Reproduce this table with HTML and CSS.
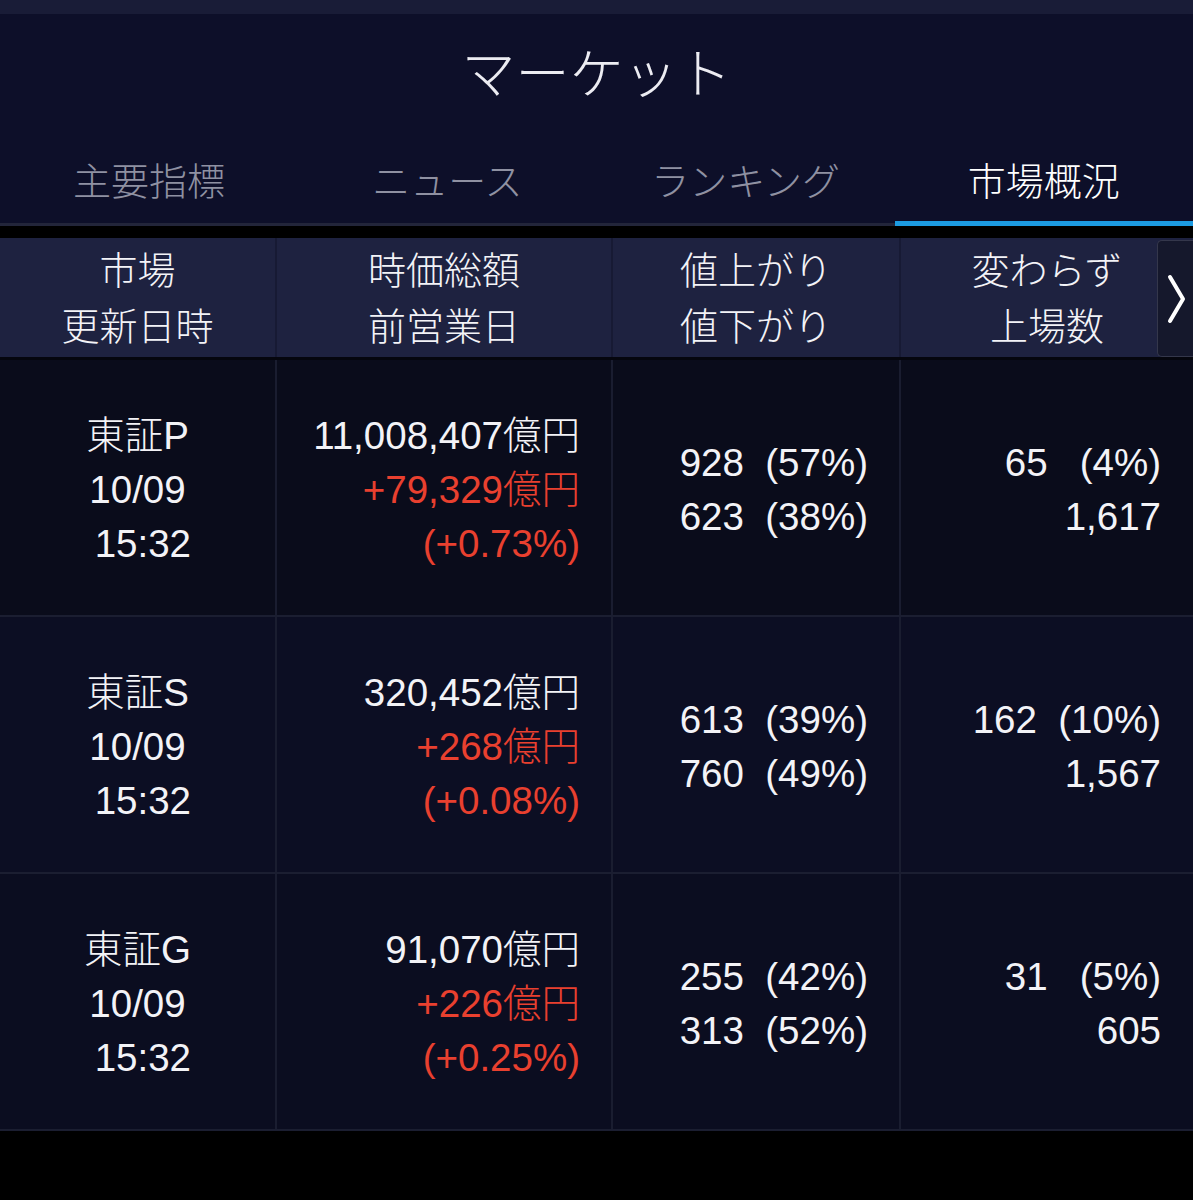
FILE: index.html
```html
<!DOCTYPE html>
<html lang="ja">
<head>
<meta charset="utf-8">
<title>マーケット</title>
<link rel="stylesheet" href="styles.css">
</head>
<body>
<div class="topbar"></div>
<header class="nav">
  <h1 class="title">マーケット</h1>
  <div class="tabs">
    <div class="tab">主要指標</div>
    <div class="tab">ニュース</div>
    <div class="tab">ランキング</div>
    <div class="tab active">市場概況</div>
  </div>
</header>
<section class="table">
  <div class="head">
    <div class="hc c1">市場<br>更新日時</div>
    <div class="hc c2">時価総額<br>前営業日</div>
    <div class="hc c3">値上がり<br>値下がり</div>
    <div class="hc c4">変わらず<br>上場数</div>
    <div class="more"><svg width="20" height="50" viewBox="0 0 20 50"><polyline points="3,3 16,25 3,47" fill="none" stroke="#ffffff" stroke-width="4" stroke-linecap="round" stroke-linejoin="round"/></svg></div>
  </div>
  <div class="row r1">
    <div class="cell c1"><span>東証P</span><span>10/09</span><span> 15:32</span></div>
    <div class="cell c2"><span>11,008,407億円</span><span class="up">+79,329億円</span><span class="up">(+0.73%)</span></div>
    <div class="cell c3"><span>928  (57%)</span><span>623  (38%)</span></div>
    <div class="cell c4"><span>65   (4%)</span><span>1,617</span></div>
  </div>
  <div class="row r2">
    <div class="cell c1"><span>東証S</span><span>10/09</span><span> 15:32</span></div>
    <div class="cell c2"><span>320,452億円</span><span class="up">+268億円</span><span class="up">(+0.08%)</span></div>
    <div class="cell c3"><span>613  (39%)</span><span>760  (49%)</span></div>
    <div class="cell c4"><span>162  (10%)</span><span>1,567</span></div>
  </div>
  <div class="row r3">
    <div class="cell c1"><span>東証G</span><span>10/09</span><span> 15:32</span></div>
    <div class="cell c2"><span>91,070億円</span><span class="up">+226億円</span><span class="up">(+0.25%)</span></div>
    <div class="cell c3"><span>255  (42%)</span><span>313  (52%)</span></div>
    <div class="cell c4"><span>31   (5%)</span><span>605</span></div>
  </div>
</section>
</body>
</html>
```
FILE: styles.css
```css
* { box-sizing: border-box; }
html, body { margin: 0; padding: 0; }
body {
  background: #000000;
  width: 1193px;
  height: 1200px;
  overflow: hidden;
  font-family: "Liberation Sans", "Noto Sans CJK JP", sans-serif;
  color: #f3f3f7;
}
.topbar { height: 14px; background: #191c37; }
.nav { background: #0d0f29; }
.title {
  margin: 0;
  padding: 29px 0 45px;
  font-size: 54px;
  line-height: 64px;
  font-weight: 300;
  text-align: center;
  color: #ececf2;
}
.tabs {
  display: grid;
  grid-template-columns: repeat(4, 1fr);
  box-shadow: inset 0 -3px 0 #22253a;
}
.tab {
  text-align: center;
  font-size: 38px;
  line-height: 60px;
  font-weight: 300;
  padding-bottom: 9px;
  border-bottom: 5px solid transparent;
  color: #8f91a2;
}
.tab.active { color: #ffffff; border-bottom-color: #1c9be2; }
.table { margin-top: 12px; }
.head {
  position: relative;
  display: grid;
  grid-template-columns: 277px 336px 288px 1fr;
  background: #1e2240;
  height: 122px;
  border-bottom: 3px solid #05060e;
}
.hc {
  font-size: 38px;
  line-height: 56px;
  font-weight: 300;
  text-align: center;
  display: flex;
  align-items: center;
  justify-content: center;
  border-right: 2px solid #171a34;
  padding-top: 2px;
}
.hc.c4 { border-right: none; }
.more {
  position: absolute;
  right: 0;
  top: 2px;
  width: 36px;
  height: 117px;
  background: #15182c;
  border: 1px solid #34374b;
  border-right: none;
  border-radius: 5px 0 0 5px;
  display: flex;
  align-items: center;
  justify-content: center;
  padding-left: 2px;
}
.row {
  display: grid;
  grid-template-columns: 277px 336px 288px 1fr;
  height: 257px;
  border-bottom: 2px solid #1b1e31;
}
.r1 { background: #0a0c1b; }
.r2 { background: #0c0e23; }
.r3 { background: #0b0d20; }
.cell {
  display: flex;
  flex-direction: column;
  justify-content: center;
  font-size: 38.5px;
  line-height: 54px;
  font-weight: 300;
  white-space: pre;
  border-right: 2px solid #1a1d30;
  padding-top: 4px;
}
.cell.c4 { border-right: none; }
.cell.c1 { align-items: center; }
.cell.c2 { align-items: flex-end; padding-right: 31px; }
.cell.c3 { align-items: flex-end; padding-right: 31px; }
.cell.c4 { align-items: flex-end; padding-right: 32px; }
.up { color: #e9402f; }
```
